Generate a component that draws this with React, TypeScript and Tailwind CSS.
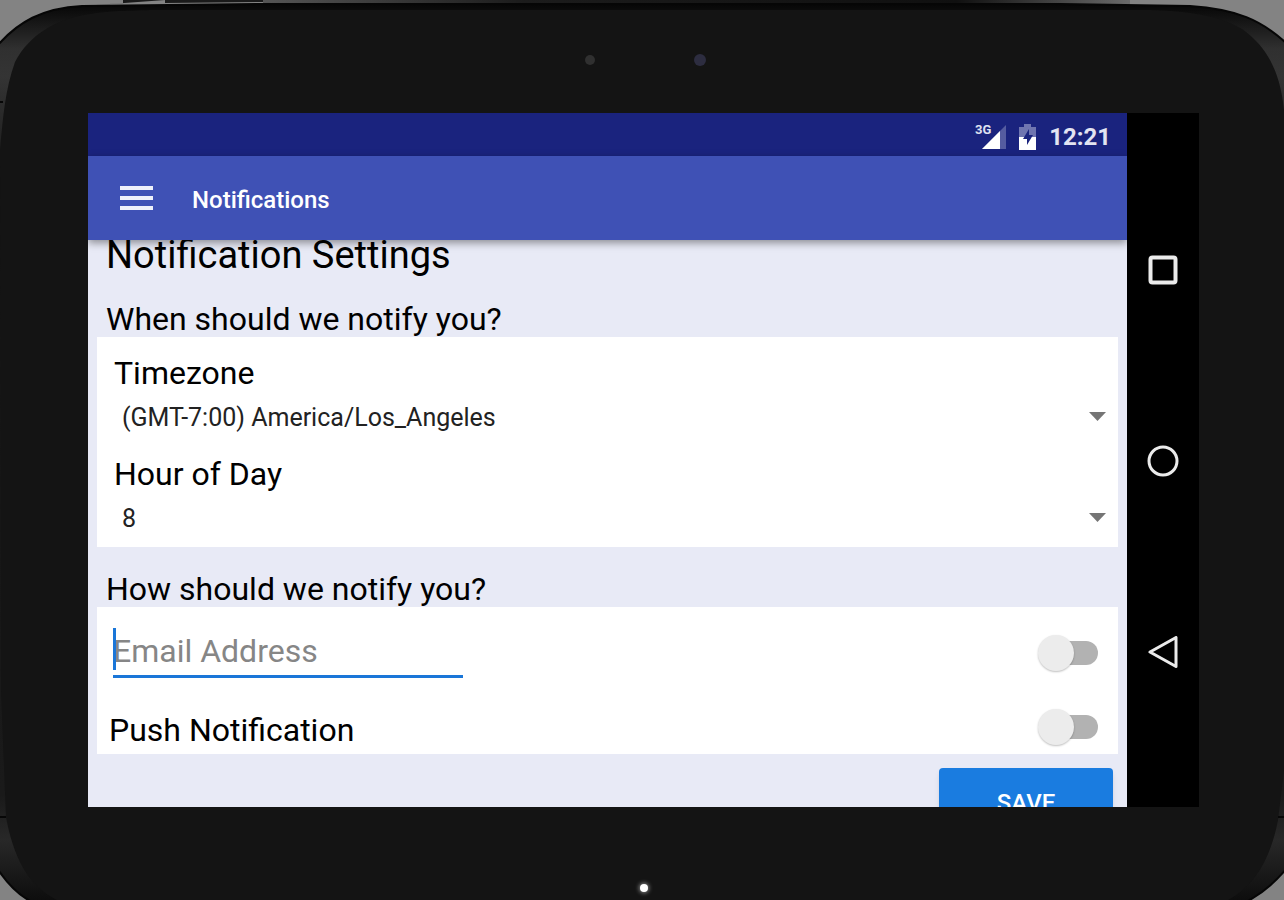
import { useState } from "react";

interface SwitchProps {
  id: string;
  label: string;
}

const Switch = ({ id, label }: SwitchProps) => (
  <input
    id={id}
    type="checkbox"
    role="switch"
    aria-label={label}
    className="relative h-6 w-14 shrink-0 appearance-none rounded-full bg-[#b2b2b2] before:absolute before:-top-1.5 before:-left-1 before:size-9 before:rounded-full before:bg-[#ececec] before:shadow-[0_1px_2px_rgba(0,0,0,0.25)] checked:bg-[#8cbcf0] checked:before:translate-x-7 checked:before:bg-[#1a7ce0]"
  />
);

interface SpinnerProps {
  id: string;
  label: string;
  options: string[];
}

const Spinner = ({ id, label, options }: SpinnerProps) => (
  <div>
    <label htmlFor={id} className="block pl-[17px] text-[32px] leading-9">
      {label}
    </label>
    <div className="flex items-center pr-3">
      <select
        id={id}
        className="h-[54px] min-w-0 flex-1 appearance-none bg-transparent pl-[25px] text-[25px] text-[#222] outline-none"
      >
        {options.map((option) => (
          <option key={option}>{option}</option>
        ))}
      </select>
      <svg width="17" height="9" viewBox="0 0 17 9" className="pointer-events-none -mt-1" aria-hidden="true">
        <path d="M0 0h17L8.500 9z" fill="#757575" />
      </svg>
    </div>
  </div>
);

/* tablet body, stretched behind the whole page */
const TabletBody = () => (
  <svg
    className="absolute inset-0 -z-10 h-full w-full"
    viewBox="0 0 1284 900"
    preserveAspectRatio="none"
    aria-hidden="true"
  >
    <defs>
      <linearGradient id="rim" x1="0" y1="0" x2="0" y2="1">
        <stop offset="0" stopColor="#060606" />
        <stop offset="0.02" stopColor="#161616" />
        <stop offset="0.05" stopColor="#303030" />
        <stop offset="0.08" stopColor="#343434" />
        <stop offset="0.14" stopColor="#262626" />
        <stop offset="0.2" stopColor="#161616" />
        <stop offset="0.88" stopColor="#1a1a1a" />
        <stop offset="0.93" stopColor="#282828" />
        <stop offset="1" stopColor="#0c0c0c" />
      </linearGradient>
      <linearGradient id="edge" x1="0" y1="0" x2="1" y2="0">
        <stop offset="0" stopColor="#555555" />
        <stop offset="0.3" stopColor="#1c1c1c" />
        <stop offset="0.8" stopColor="#101010" />
        <stop offset="1" stopColor="#6a6a6a" />
      </linearGradient>
    </defs>
    {/* side buttons */}
    <path d="M70 7L123 3V0H165V3L263 2V0H165" fill="#1a1a1a" />
    <path d="M263 0H1130V5H263z" fill="url(#edge)" />
    <path
      d="M-3 46C18 22 42 8 82 6L262 4H1060L1190 6C1236 9 1262 20 1287 44V868C1274 884 1260 895 1244 903H34C19 896 8 885-3 868Z"
      fill="url(#rim)"
      stroke="#060606"
      strokeWidth="2"
    />
    <path
      d="M0 150C3 118 5 90 15 62C30 34 56 19 90 14C108 11 120 11 150 10H1150C1190 11 1220 16 1242 29C1266 46 1280 70 1284 110V770L1278 820C1270 862 1252 890 1222 903H64C30 890 14 860 6 817L1 690Z"
      fill="#141414"
    />
    <path d="M0 102h3M0 817h6M1278 817h6" stroke="#070707" strokeWidth="2" />
  </svg>
);

const StatusBar = () => (
  <div className="flex h-[43px] shrink-0 items-center justify-end bg-[#1a237e] pt-1 pr-4 text-white">
    <svg width="32" height="28" viewBox="0 0 32 28" aria-label="3G signal">
      <text x="0" y="11" fontSize="13" fontWeight="700" fill="#dfe0f0">
        3G
      </text>
      <path d="M31 2V26H7z" fill="#555ca0" />
      <path d="M25 8V26H7z" fill="#fff" />
    </svg>
    <svg width="18" height="26" viewBox="0 0 18 26" className="mx-3" aria-label="Battery charging">
      <path d="M5 0h7v3h5v11H0V3h5z" fill="#6f75b0" />
      <path d="M0 13h17v13H0z" fill="#fff" />
      <path d="M10 5L4 15h4v6l6-10h-4z" fill="#1a237e" />
    </svg>
    <span className="text-[24px] leading-8 font-bold text-[#e3e4f2]">12:21</span>
  </div>
);

const AppBar = () => (
  <header className="relative z-10 flex h-[84px] shrink-0 items-center gap-[39px] bg-[#3f51b5] pl-8 text-white shadow-[0_3px_8px_rgba(0,0,0,0.4)]">
    <button type="button" aria-label="Open menu">
      <svg width="33" height="24" viewBox="0 0 33 24" aria-hidden="true">
        <path d="M0 2h33M0 12h33M0 22h33" stroke="#eef0fa" strokeWidth="4" />
      </svg>
    </button>
    <h1 className="pt-1 text-[24px] leading-8 font-medium">Notifications</h1>
  </header>
);

const NavBar = () => (
  <nav className="flex w-[72px] shrink-0 flex-col items-center justify-center gap-[159px] bg-black pt-0.5 text-[#ebebeb]">
    <button type="button" aria-label="Recent apps">
      <svg width="32" height="32" viewBox="0 0 32 32" fill="none" stroke="currentColor" strokeWidth="4" aria-hidden="true">
        <rect x="3.500" y="3.500" width="25" height="25" rx="2" />
      </svg>
    </button>
    <button type="button" aria-label="Home">
      <svg width="32" height="32" viewBox="0 0 32 32" fill="none" stroke="currentColor" strokeWidth="3" aria-hidden="true">
        <circle cx="16" cy="16" r="14" />
      </svg>
    </button>
    <button type="button" aria-label="Back">
      <svg width="32" height="32" viewBox="0 0 32 32" fill="none" stroke="currentColor" strokeWidth="3" strokeLinejoin="round" aria-hidden="true">
        <path d="M29 1.500V30.500L3 16z" />
      </svg>
    </button>
  </nav>
);

const NotificationSettings = () => {
  const [email, setEmail] = useState("");

  return (
    <main className="-mt-[7px] px-[9px] text-black">
      <h2 className="pl-[9px] text-[38px] leading-[44px]">Notification Settings</h2>

      <h3 className="mt-6 pl-[9px] text-[32px] leading-9">When should we notify you?</h3>
      <section className="flex flex-col gap-[11px] bg-white pt-[18px] pb-px">
        <Spinner id="timezone" label="Timezone" options={["(GMT-7:00) America/Los_Angeles"]} />
        <Spinner id="hour" label="Hour of Day" options={["8", "9", "10", "11", "12"]} />
      </section>

      <h3 className="mt-6 pl-[9px] text-[32px] leading-9">How should we notify you?</h3>
      <section className="bg-white pt-2 pr-5">
        <div className="flex h-[75px] items-center justify-between">
          <div className="relative ml-4">
            <input
              type="email"
              aria-label="Email Address"
              placeholder="Email Address"
              value={email}
              onChange={(e) => setEmail(e.target.value)}
              className="h-[50px] w-[350px] border-b-[3px] border-[#1a76d8] text-[32px] leading-9 outline-none placeholder:text-[#868686]"
            />
            {/* caret */}
            <span className="absolute top-0 left-0 h-[42px] w-[3px] bg-[#1a76d8]" />
          </div>
          <Switch id="email-switch" label="Email notification" />
        </div>
        <div className="flex h-16 items-center justify-between pt-2.5">
          <label htmlFor="push-switch" className="pt-1.5 pl-3 text-[32px] leading-9">
            Push Notification
          </label>
          <Switch id="push-switch" label="Push Notification" />
        </div>
      </section>

      <div className="flex justify-end pt-3.5 pr-[5px]">
        <button
          type="button"
          className="h-[70px] w-[174px] rounded-sm bg-[#1a7ce0] text-[24px] font-medium text-white shadow-md"
        >
          SAVE
        </button>
      </div>
    </main>
  );
};

export default function App() {
  return (
    <div className="relative isolate flex h-screen flex-col bg-[#838383] font-['Roboto',sans-serif]">
      <TabletBody />

      {/* light sensor and camera */}
      <div className="flex h-[113px] shrink-0 items-center justify-center gap-[99px] pt-1.5 pl-1.5">
        <span className="size-2.5 rounded-full bg-[#303030]" />
        <span className="size-3 rounded-full bg-[#2d2d40]" />
      </div>

      <div className="mr-[85px] ml-[88px] flex min-h-0 flex-1">
        <div className="flex min-w-0 flex-1 flex-col overflow-hidden bg-[#e8eaf6]">
          <StatusBar />
          <AppBar />
          <div className="min-h-0 flex-1 overflow-hidden">
            <NotificationSettings />
          </div>
        </div>
        <NavBar />
      </div>

      {/* charging light */}
      <div className="flex h-[93px] shrink-0 items-end justify-center pb-2 pl-1">
        <span className="size-2 rounded-full bg-white shadow-[0_0_4px_1px_rgba(255,255,255,0.5)]" />
      </div>
    </div>
  );
}
